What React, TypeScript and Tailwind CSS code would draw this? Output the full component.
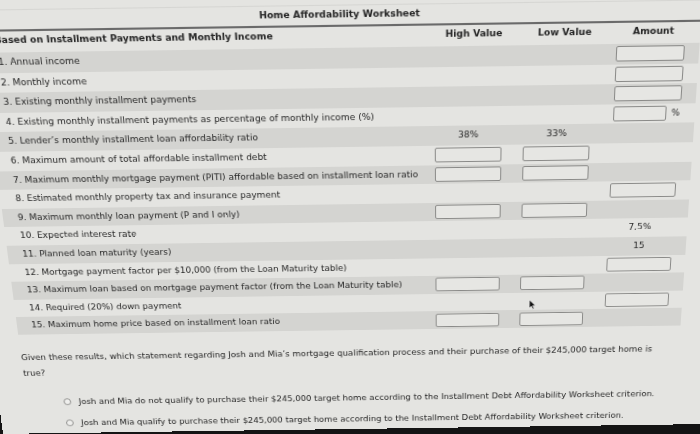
type Cell = string | undefined;

interface Row {
  label: string;
  high?: Cell;
  low?: Cell;
  amount?: Cell;
}

const rows: Row[] = [
  { label: '1. Annual income', amount: 'box' },
  { label: '2. Monthly income', amount: 'box' },
  { label: '3. Existing monthly installment payments', amount: 'box' },
  { label: '4. Existing monthly installment payments as percentage of monthly income (%)', amount: 'pct' },
  { label: '5. Lender’s monthly installment loan affordability ratio', high: '38%', low: '33%' },
  { label: '6. Maximum amount of total affordable installment debt', high: 'box', low: 'box' },
  { label: '7. Maximum monthly mortgage payment (PITI) affordable based on installment loan ratio', high: 'box', low: 'box' },
  { label: '8. Estimated monthly property tax and insurance payment', amount: 'box' },
  { label: '9. Maximum monthly loan payment (P and I only)', high: 'box', low: 'box' },
  { label: '10. Expected interest rate', amount: '7.5%' },
  { label: '11. Planned loan maturity (years)', amount: '15' },
  { label: '12. Mortgage payment factor per $10,000 (from the Loan Maturity table)', amount: 'box' },
  { label: '13. Maximum loan based on mortgage payment factor (from the Loan Maturity table)', high: 'box', low: 'box' },
  { label: '14. Required (20%) down payment', amount: 'box' },
  { label: '15. Maximum home price based on installment loan ratio', high: 'box', low: 'box' },
];

function Box({ w = 'w-[66px]' }: { w?: string }) {
  return <div className={`${w} h-[15px] rounded-[2px] border border-[#8a8a88] bg-[#e6e6e3]`} />;
}

function ValueCell({ value, align }: { value: Cell; align: 'center' | 'start' }) {
  if (!value) return <div />;
  if (value === 'box') {
    return (
      <div className={align === 'center' ? 'flex justify-center' : 'flex pl-[6px]'}>
        <Box />
      </div>
    );
  }
  if (value === 'pct') {
    return (
      <div className="flex items-center pl-[6px]">
        <Box w="w-[52px]" />
        <span className="ml-[5px] text-[8.5px]">%</span>
      </div>
    );
  }
  return <div className="text-center">{value}</div>;
}

function Cursor() {
  return (
    <svg width="8" height="12" viewBox="0 0 8 12" className="absolute left-[14px] top-[-3px]">
      <path d="M1 1 L1 10 L3.2 8 L4.8 11.2 L6 10.6 L4.5 7.5 L7.2 7.4 Z" fill="#111" stroke="#eee" strokeWidth="0.6" />
    </svg>
  );
}

function Radio({ children }: { children: string }) {
  return (
    <label className="flex items-center gap-[8px]">
      <span className="h-[8px] w-[8px] shrink-0 rounded-full border border-[#8a8a88] bg-[#efefed]" />
      {children}
    </label>
  );
}

export default function App() {
  return (
    <div className="h-[434px] w-[700px] overflow-hidden bg-[#141414]">
      <div className="ml-[-30px] mt-[-20px] h-[476px] w-[770px] origin-[435px_210px] bg-[#e4e4e1] pl-[30px] pt-[20px] font-['DejaVu_Sans',Verdana,sans-serif] text-[#262626] [transform:rotate(-0.8deg)_perspective(1000px)_rotateX(-16deg)]">
        <div className="w-[690px]">
          <div className="h-[7px] border-b border-[#d6d6d3]" />
          <div className="flex h-[18px] items-center justify-center text-[9px] font-bold">
            Home Affordability Worksheet
          </div>
          <div className="h-[2px] bg-[#6a6a6a]" />
          <div className="grid h-[20px] grid-cols-[1fr_76px_76px_76px] items-start gap-x-[11px] pl-[15px] pr-[10px] pt-[1.5px] text-[9px] font-bold">
            <div className="-ml-[1px]">Based on Installment Payments and Monthly Income</div>
            <div className="pl-[10px] text-center">High Value</div>
            <div className="pl-[10px] text-center">Low Value</div>
            <div className="pl-[6px] text-center">Amount</div>
          </div>
          {rows.map((r, i) => (
            <div
              key={i}
              className={`grid h-[19.6px] grid-cols-[1fr_76px_76px_76px] items-center gap-x-[11px] pl-[15px] pr-[10px] text-[9px] ${
                i % 2 === 0 ? 'bg-[#d4d4d1]' : ''
              }`}
            >
              <div className="whitespace-nowrap">{r.label}</div>
              <ValueCell value={r.high} align="center" />
              <div className="relative">
                <ValueCell value={r.low} align="center" />
                {i === 13 && <Cursor />}
              </div>
              <ValueCell value={r.amount} align="start" />
            </div>
          ))}
          <div className="pt-[17px] text-[9px] leading-[18px]">
            <p className="w-[680px]">
              Given these results, which statement regarding Josh and Mia’s mortgage qualification process and their purchase of their $245,000 target home is true?
            </p>
            <div className="mt-[17px] flex flex-col gap-[8px] pl-[39px] text-[9px] leading-[17px]">
              <Radio>
                Josh and Mia do not qualify to purchase their $245,000 target home according to the Installment Debt Affordability Worksheet criterion.
              </Radio>
              <Radio>
                Josh and Mia qualify to purchase their $245,000 target home according to the Installment Debt Affordability Worksheet criterion.
              </Radio>
            </div>
          </div>
        </div>
      </div>
    </div>
  );
}
